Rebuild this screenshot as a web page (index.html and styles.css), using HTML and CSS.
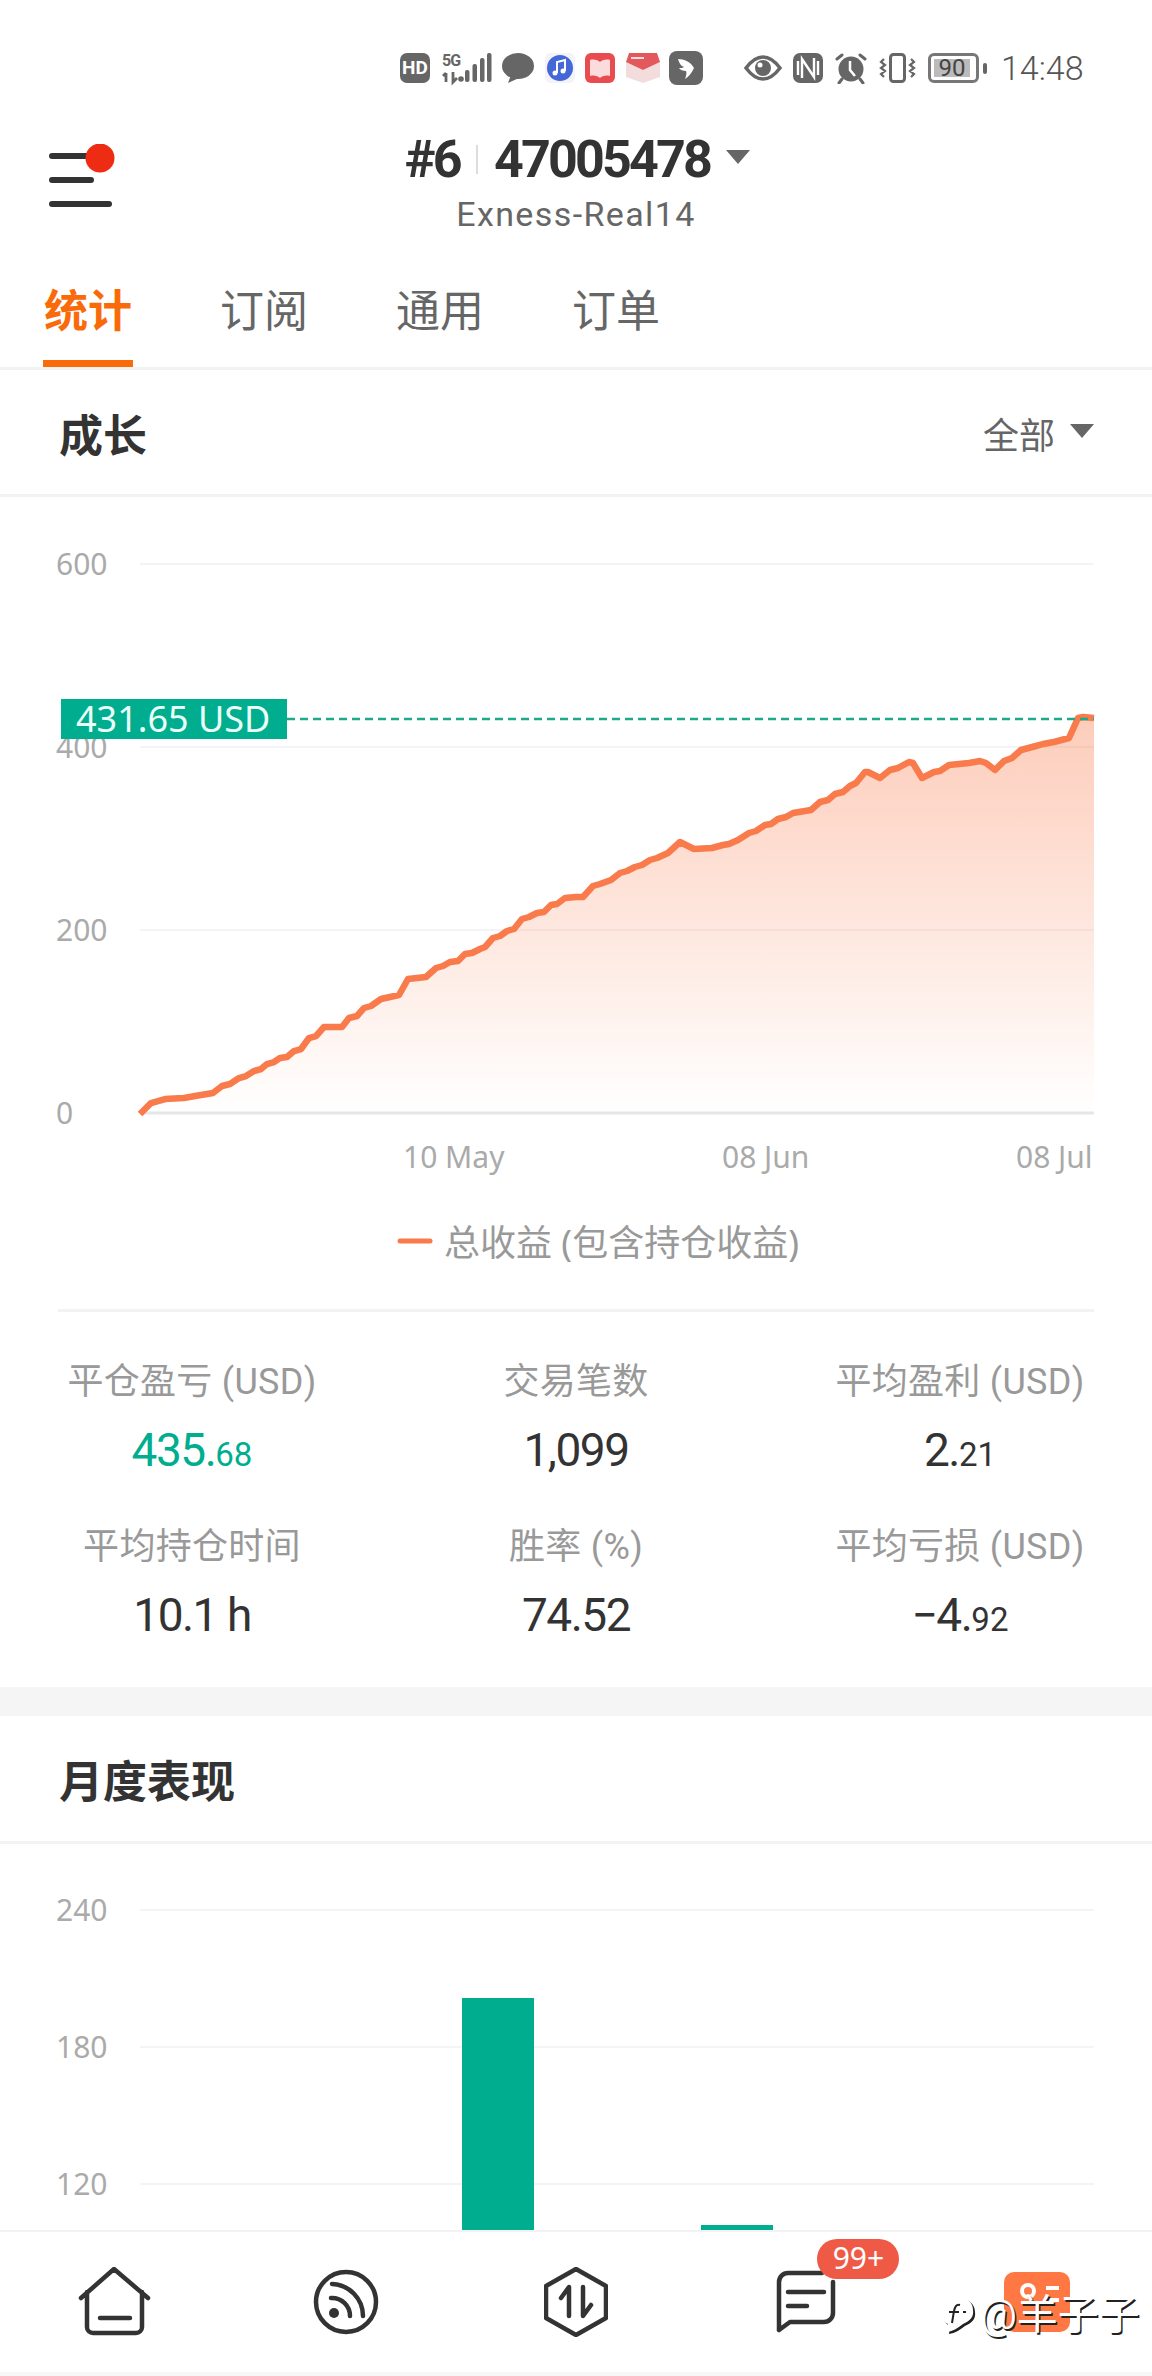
FILE: index.html
```html
<!DOCTYPE html>
<html lang="zh">
<head>
    <meta charset="UTF-8">
    <meta name="viewport" content="width=device-width, initial-scale=1.0">
    <title>Account stats</title>
    <link rel="stylesheet" href="styles.css">
</head>
<body>
    <div class="statusbar">
        <div class="hd-icon">HD</div>
        <svg class="ic" width="51" height="36" viewBox="0 -3 51 36">
            <text class="net-text" x="1" y="13">5G</text>
            <path d="M5 20v9M2 23l3-3M12 19v10l4-4" class="net-line"/>
            <circle cx="20" cy="26" r="2.8" fill="#666"/>
            <rect x="24" y="17" width="4.5" height="12" rx="2" fill="#666"/>
            <rect x="31.5" y="11" width="4.5" height="18" rx="2" fill="#666"/>
            <rect x="39" y="5" width="4.5" height="24" rx="2" fill="#666"/>
            <rect x="46" y="0" width="4.5" height="29" rx="2" fill="#666"/>
        </svg>
        <svg class="ic" width="32" height="30" viewBox="0 0 32 30">
            <ellipse cx="16" cy="13" rx="16" ry="13" fill="#666"/>
            <path d="M9 22l-3 8 11-5z" fill="#666"/>
        </svg>
        <svg class="ic" width="30" height="30" viewBox="0 0 30 30">
            <rect width="30" height="30" rx="6" fill="#f4f2fa"/>
            <circle cx="15" cy="15" r="13" fill="#4468d8"/>
            <path d="M12 20V9l8-2v11" fill="none" stroke="#fff" stroke-width="2"/>
            <circle cx="10" cy="20" r="2.5" fill="#fff"/>
            <circle cx="18" cy="18" r="2.5" fill="#fff"/>
        </svg>
        <svg class="ic" width="30" height="30" viewBox="0 0 30 30">
            <rect width="30" height="30" rx="6" fill="#e84b50"/>
            <path d="M5 7c4-1 8 0 10 2 2-2 6-3 10-2v16c-4-1-8 0-10 2-2-2-6-3-10-2z" fill="#fbdcdc"/>
        </svg>
        <svg class="ic" width="34" height="30" viewBox="0 0 34 30">
            <path d="M0 9l17 8 17-8v15l-17 6-17-6z" fill="#f2dcdc"/>
            <path d="M3 0h28l3 9-17 8L0 9z" fill="#e2585c"/>
            <rect x="5" y="4" width="13" height="2" fill="#fbdcdc"/>
        </svg>
        <svg class="ic brand" width="34" height="34" viewBox="0 0 34 34">
            <rect width="34" height="34" rx="8" fill="#666"/>
            <path d="M9 8c6 0 13 3 16 9-2 5-6 9-9 11 1-3 2-6 1-8-3 0-6-1-7-3 2 0 4 0 5-1-3-1-5-4-6-8z" fill="#fff"/>
        </svg>
        <svg class="ic eye" width="38" height="26" viewBox="0 0 38 26">
            <path d="M2 13C8 5 13 2 19 2s11 3 17 11c-6 8-11 11-17 11S8 21 2 13z" fill="none" stroke="#666" stroke-width="3.5"/>
            <circle cx="19" cy="13" r="8" fill="#666"/>
            <circle cx="16" cy="10" r="2.5" fill="#fff"/>
        </svg>
        <svg class="ic" width="30" height="30" viewBox="0 0 30 30">
            <rect width="30" height="30" rx="7" fill="#666"/>
            <path d="M9 25V6l12 18V5M5 8v14M25 8v14" fill="none" stroke="#fff" stroke-width="2.4"/>
        </svg>
        <svg class="ic alarm" width="32" height="31" viewBox="0 0 32 31">
            <circle cx="16" cy="16" r="12.5" fill="#666"/>
            <path d="M15 8v9l5 6" fill="none" stroke="#fff" stroke-width="2.5"/>
            <path d="M2 6l5-4M30 6l-5-4M7 26l-3 4M25 26l3 4" stroke="#666" stroke-width="3" stroke-linecap="round"/>
        </svg>
        <svg class="ic vibrate" width="37" height="30" viewBox="0 0 37 30">
            <rect x="11.5" y="1.5" width="14" height="27" rx="3" fill="none" stroke="#666" stroke-width="3"/>
            <path d="M5 6l-3 3 4 3-4 3 4 3-4 3 3 3M32 6l3 3-4 3 4 3-4 3 4 3-3 3" fill="none" stroke="#666" stroke-width="2.2"/>
        </svg>
        <div class="battery">
            <div class="battery-body"><span>90</span></div>
            <div class="battery-nub"></div>
        </div>
        <div class="clock">14:48</div>
    </div>

    <div class="topbar">
        <svg class="menu" width="66" height="66" viewBox="0 0 66 66">
            <path d="M3 12h40M3 36h39M3 60h57" stroke="#333" stroke-width="6" stroke-linecap="round"/>
            <circle cx="51" cy="14" r="14.5" fill="#ee2c14"/>
        </svg>
        <div class="account">
            <div class="account-title">
                <span>#6</span>
                <i class="sep"></i>
                <span>47005478</span>
                <i class="caret"></i>
            </div>
            <div class="account-server">Exness-Real14</div>
        </div>
    </div>

    <div class="tabs">
        <div class="tab active">统计</div>
        <div class="tab">订阅</div>
        <div class="tab">通用</div>
        <div class="tab">订单</div>
    </div>

    <div class="main">
        <div class="section-head first">
            <h2>成长</h2>
            <div class="range">全部<i class="caret small"></i></div>
        </div>

        <svg class="chart" width="1152" height="812" viewBox="0 497 1152 812">
            <defs>
                <linearGradient id="areaFill" x1="0" y1="0" x2="0" y2="1">
                    <stop offset="0" stop-color="#f97a4a" stop-opacity="0.38"/>
                    <stop offset="1" stop-color="#f97a4a" stop-opacity="0"/>
                </linearGradient>
            </defs>
            <path class="grid" d="M140 564H1094M140 747H1094M140 930H1094"/>
            <path class="axis" d="M140 1113H1094"/>
            <text class="tick" x="56" y="575">600</text>
            <text class="tick" x="56" y="758">400</text>
            <text class="tick" x="56" y="941">200</text>
            <text class="tick" x="56" y="1124">0</text>
            <path fill="url(#areaFill)" d="M140 1114L151 1103 165 1099 184 1098 195 1096 213 1093 222 1086 230 1084 239 1078 246 1076 254 1071 261 1069 267 1064 274 1062 280 1058 287 1057 294 1051 301 1049 309 1038 316 1036 324 1027 342 1027 349 1018 357 1016 364 1008 371 1006 381 999 399 995 408 979 426 977 436 968 443 966 450 962 458 961 465 954 472 953 480 949 485 947 493 938 500 936 507 931 514 929 522 919 529 917 537 913 544 912 551 905 557 904 565 898 576 897 583 897 593 886 600 884 611 880 620 873 627 871 635 867 642 865 650 860 657 858 668 853 680 842 694 849 712 848 723 845 729 844 738 840 749 833 756 831 765 825 771 824 778 819 786 817 793 813 811 810 820 802 828 800 835 794 843 792 850 786 856 783 865 772 868 772 880 778 890 770 898 768 909 762 913 763 922 778 934 772 940 771 949 765 969 763 980 761 986 763 995 770 1004 761 1012 758 1021 750 1036 746 1043 744 1054 742 1069 738 1078 718 1083 717 1094 718V1113H140Z"/>
            <path class="profit-line" d="M140 1114L151 1103 165 1099 184 1098 195 1096 213 1093 222 1086 230 1084 239 1078 246 1076 254 1071 261 1069 267 1064 274 1062 280 1058 287 1057 294 1051 301 1049 309 1038 316 1036 324 1027 342 1027 349 1018 357 1016 364 1008 371 1006 381 999 399 995 408 979 426 977 436 968 443 966 450 962 458 961 465 954 472 953 480 949 485 947 493 938 500 936 507 931 514 929 522 919 529 917 537 913 544 912 551 905 557 904 565 898 576 897 583 897 593 886 600 884 611 880 620 873 627 871 635 867 642 865 650 860 657 858 668 853 680 842 694 849 712 848 723 845 729 844 738 840 749 833 756 831 765 825 771 824 778 819 786 817 793 813 811 810 820 802 828 800 835 794 843 792 850 786 856 783 865 772 868 772 880 778 890 770 898 768 909 762 913 763 922 778 934 772 940 771 949 765 969 763 980 761 986 763 995 770 1004 761 1012 758 1021 750 1036 746 1043 744 1054 742 1069 738 1078 718 1083 717 1094 718"/>
            <path class="last-line" d="M287 719H1094"/>
            <rect x="61" y="699" width="226" height="40" fill="#00ae8f"/>
            <text class="last-label" x="76" y="732">431.65 USD</text>
            <text class="tick" x="403" y="1168">10 May</text>
            <text class="tick" x="722" y="1168">08 Jun</text>
            <text class="tick" x="1016" y="1168">08 Jul</text>
            <path d="M400 1241H430" stroke="#f97a4a" stroke-width="5" stroke-linecap="round"/>
            <text class="legend" x="444" y="1256">总收益 (包含持仓收益)</text>
        </svg>

        <div class="divider"></div>

        <div class="stats">
            <div class="stat"><div class="stat-label">平仓盈亏 (USD)</div><div class="stat-value green">435.<small>68</small></div></div>
            <div class="stat"><div class="stat-label">交易笔数</div><div class="stat-value">1,099</div></div>
            <div class="stat"><div class="stat-label">平均盈利 (USD)</div><div class="stat-value">2.<small>21</small></div></div>
            <div class="stat"><div class="stat-label">平均持仓时间</div><div class="stat-value">10.1 h</div></div>
            <div class="stat"><div class="stat-label">胜率 (%)</div><div class="stat-value">74.52</div></div>
            <div class="stat"><div class="stat-label">平均亏损 (USD)</div><div class="stat-value">−4.<small>92</small></div></div>
        </div>

        <div class="band"></div>

        <div class="section-head">
            <h2>月度表现</h2>
        </div>

        <svg class="chart" width="1152" height="386" viewBox="0 1844 1152 386">
            <path class="grid" d="M140 1910H1094M140 2047H1094M140 2184H1094"/>
            <text class="tick" x="56" y="1921">240</text>
            <text class="tick" x="56" y="2058">180</text>
            <text class="tick" x="56" y="2195">120</text>
            <rect x="462" y="1998" width="72" height="232" fill="#00ae8f"/>
            <rect x="701" y="2225" width="72" height="5" fill="#00ae8f"/>
        </svg>
    </div>

    <div class="bottom-nav">
        <svg width="74" height="70" viewBox="0 0 74 70" class="nav-ic">
            <path d="M3 31L36 2l34 29M9 25v35a6 6 0 0 0 6 6h43a6 6 0 0 0 6-6V25M22 51h30"/>
        </svg>
        <svg width="70" height="70" viewBox="0 0 70 70" class="nav-ic">
            <circle cx="35" cy="35" r="30"/>
            <path d="M20 31A18 18 0 0 1 39 49M21 17A32 32 0 0 1 52 49"/>
            <circle cx="23" cy="46" r="5" class="solid"/>
        </svg>
        <svg width="64" height="70" viewBox="0 0 64 70" class="nav-ic">
            <path d="M32 2L62 19V51L32 68 2 51V19ZM25 49V20L17 31M39 20V49L47 38"/>
        </svg>
        <div class="nav-msg">
            <svg width="60" height="64" viewBox="0 0 60 64" class="nav-ic">
                <path d="M3 60V12a9 9 0 0 1 9-9H46M57 12V43a9 9 0 0 1-9 9H14L3 60M12 22H48M12 36H31"/>
            </svg>
            <div class="badge">99+</div>
        </div>
        <svg width="66" height="60" viewBox="0 0 66 60">
            <rect width="66" height="60" rx="10" fill="#ff7743"/>
            <circle cx="24" cy="19" r="6" fill="none" stroke="#fff" stroke-width="4"/>
            <path d="M42 16H55M42 28H55" stroke="#fff" stroke-width="4"/>
        </svg>
        <div class="watermark">
            <svg width="38" height="40" viewBox="0 0 38 40">
                <path class="wm-back" d="M19 3C10 3 3 10 4 19c0 6 3 10 7 12l-1 8c6-1 11-4 16-8 7-3 11-7 10-14C36 9 29 3 19 3Z"/>
                <path class="wm-front" d="M17 1C8 1 1 8 2 17c0 6 3 10 7 12l-1 8c6-1 11-4 16-8 7-3 11-7 10-14C34 7 27 1 17 1Z"/>
                <path d="M21 10c-4-1-5 2-6 6l-2 12M10 17H20M24 17h3" fill="none" stroke="#222" stroke-width="2"/>
            </svg>
            <span>@羊子子</span>
        </div>
    </div>
</body>
</html>
```

FILE: styles.css
```css
* {
    box-sizing: border-box;
}

body {
    font-family: Roboto, "Noto Sans CJK SC", sans-serif;
    margin: 0;
    width: 1152px;
    height: 2376px;
    display: flex;
    flex-direction: column;
    overflow: hidden;
    background-color: #f7f7f7;
}

/* Status bar */
.statusbar {
    height: 90px;
    padding: 46px 0 0 400px;
    display: flex;
    align-items: center;
    gap: 10.5px;
    background: #fff;
}

.ic {
    display: block;
    flex: none;
}

.ic.eye {
    margin-left: 30.5px;
}

.ic.brand {
    margin-left: -1px;
}

.ic.alarm {
    margin-left: 2px;
}

.ic.vibrate {
    margin-left: 1.5px;
}

.hd-icon {
    width: 30px;
    height: 30px;
    border-radius: 7px;
    background: #666;
    color: #fff;
    font-size: 19px;
    font-weight: 700;
    line-height: 30px;
    text-align: center;
}

.net-text {
    font-size: 16px;
    font-weight: 700;
    letter-spacing: -1px;
    fill: #666;
}

.net-line {
    fill: none;
    stroke: #666;
    stroke-width: 2.8;
}

.battery {
    display: flex;
    align-items: center;
    gap: 4px;
    margin-left: 1.5px;
}

.battery-body {
    width: 51px;
    height: 30px;
    padding: 3px 6px 3px 3px;
    border: 3px solid #777;
    border-radius: 6px;
}

.battery-body span {
    display: block;
    height: 18px;
    background: #bbb;
    color: #444;
    font-size: 24px;
    line-height: 18px;
    text-align: center;
}

.battery-nub {
    width: 4px;
    height: 11px;
    border-radius: 2px;
    background: #666;
}

.clock {
    margin-left: 3.5px;
    font-size: 34px;
    font-weight: 300;
    color: #555;
}

/* Account header */
.topbar {
    height: 180px;
    display: grid;
    grid-template-columns: 1fr auto 1fr;
    background: #fff;
}

.menu {
    margin: 54px 0 0 49px;
}

.account {
    grid-column: 2;
    padding-top: 44px;
    text-align: center;
}

.account-title {
    display: flex;
    align-items: center;
    gap: 16px;
    height: 50px;
    margin-left: 3px;
    font-size: 52px;
    font-weight: 700;
    letter-spacing: -2.8px;
    color: #333;
}

.sep {
    width: 2px;
    height: 29px;
    background: #ddd;
}

.caret {
    display: inline-block;
    margin-bottom: 4px;
    border-left: 12px solid transparent;
    border-right: 12px solid transparent;
    border-top: 14px solid #666;
}

.caret.small {
    margin: 0 0 4px 15px;
}

.account-server {
    margin-top: 10px;
    font-size: 34px;
    line-height: 40px;
    letter-spacing: 1.4px;
    color: #666;
}

.tabs {
    display: flex;
    gap: 86px;
    padding-left: 43px;
    background: #fff;
    border-bottom: 3px solid #f2f2f2;
}

.tab {
    width: 90px;
    height: 97px;
    padding-bottom: 6px;
    font-size: 44px;
    line-height: 84px;
    text-align: center;
    color: #666;
    border-bottom: 7px solid transparent;
}

.tab.active {
    font-weight: 700;
    color: #f96b0a;
    border-bottom-color: #f96b0a;
}

/* Sections */
.main {
    flex: 1;
    overflow: hidden;
    background: #fff;
}

.section-head {
    height: 128px;
    padding: 0 58px 0 59px;
    display: flex;
    align-items: center;
    justify-content: space-between;
    border-bottom: 3px solid #f2f2f2;
}

.section-head.first {
    height: 127px;
    padding-top: 1px;
}

.section-head h2 {
    margin: 0;
    font-size: 44px;
    font-weight: 700;
    color: #333;
}

.range {
    display: flex;
    align-items: center;
    font-size: 36px;
    color: #666;
}

.chart {
    display: block;
}

.grid {
    fill: none;
    stroke: #f4f4f4;
    stroke-width: 2;
}

.axis {
    fill: none;
    stroke: #e6e6e6;
    stroke-width: 3;
}

.tick {
    font-family: "Noto Sans", sans-serif;
    font-size: 30px;
    fill: #aaa;
}

.profit-line {
    fill: none;
    stroke: #f97a4a;
    stroke-width: 6.5;
    stroke-linejoin: round;
}

.last-line {
    fill: none;
    stroke: #1fa98c;
    stroke-width: 2.5;
    stroke-dasharray: 8 5;
}

.last-label {
    font-family: "Noto Sans", sans-serif;
    font-size: 36px;
    fill: #eafff9;
}

.legend {
    font-family: "Noto Sans", "Noto Sans CJK SC", sans-serif;
    font-size: 36px;
    fill: #999;
}

.divider {
    height: 3px;
    margin: 0 58px;
    background: #f2f2f2;
}

/* Stats grid */
.stats {
    display: grid;
    grid-template-columns: repeat(3, 1fr);
    grid-auto-rows: 123px;
    row-gap: 42px;
    padding: 45px 0 42px;
}

.stat {
    text-align: center;
}

.stat-label {
    height: 50px;
    font-size: 36px;
    letter-spacing: 0.3px;
    line-height: 50px;
    color: #999;
}

.stat-value {
    height: 60px;
    margin-top: 13px;
    font-size: 46px;
    letter-spacing: -1.5px;
    line-height: 60px;
    color: #333;
}

.stat-value small {
    font-size: 33px;
    letter-spacing: 0;
}

.stat-value.green {
    color: #00ae8f;
}

.band {
    height: 29px;
    background: #f5f5f5;
}

/* Bottom navigation */
.bottom-nav {
    position: relative;
    flex: none;
    height: 142px;
    margin-bottom: 4px;
    display: grid;
    grid-template-columns: repeat(5, 1fr);
    align-items: center;
    justify-items: center;
    background: #fff;
    border-top: 2px solid #f2f2f2;
}

.nav-ic {
    display: block;
    fill: none;
    stroke: #333;
    stroke-width: 4.5;
    stroke-linecap: round;
    stroke-linejoin: round;
}

.nav-ic .solid {
    fill: #333;
    stroke: none;
}

.nav-msg {
    position: relative;
}

.badge {
    position: absolute;
    left: 41px;
    top: -31px;
    width: 82px;
    height: 40px;
    border-radius: 20px;
    background: #ef5a47;
    color: #fff;
    font-family: "Noto Sans", sans-serif;
    font-size: 30px;
    line-height: 38px;
    text-align: center;
}

.watermark {
    position: absolute;
    left: 939px;
    top: 61px;
    display: flex;
    align-items: center;
    gap: 3px;
    font-size: 41px;
    line-height: 44px;
    color: #fff;
    text-shadow: 1.5px 1.5px 0 #222;
}

.wm-back {
    fill: #222;
}

.wm-front {
    fill: #fff;
}
```
